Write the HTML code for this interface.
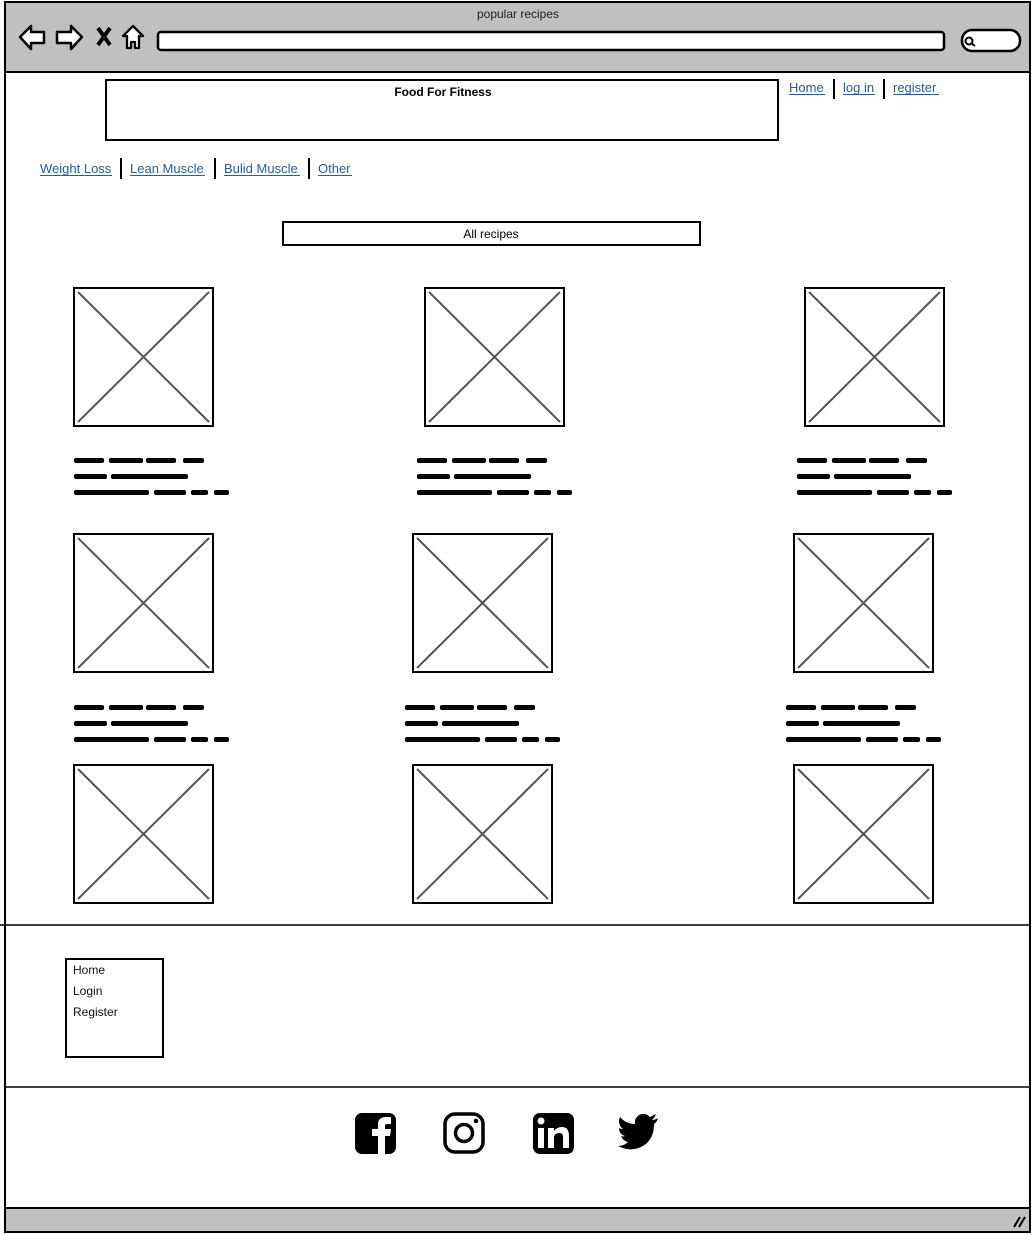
<!DOCTYPE html>
<html><head><meta charset="utf-8"><style>
html,body{margin:0;padding:0;background:#fff;width:1033px;height:1235px;overflow:hidden}
svg{display:block}
text{font-family:"Liberation Sans",sans-serif}
</style></head><body>
<svg width="1033" height="1235" viewBox="0 0 1033 1235" xmlns="http://www.w3.org/2000/svg">
<defs>
<g id="ph"><rect x="0" y="0" width="139" height="138" fill="#fff" stroke="#000" stroke-width="2"/><path d="M4 4L135 134M135 4L4 134" stroke="#555" stroke-width="2"/></g>
<g id="sq" fill="#000">
<rect x="0" y="-2" width="30" height="5" rx="2"/><rect x="35" y="-2" width="34" height="5" rx="2"/><rect x="72" y="-2" width="30" height="5" rx="2"/><rect x="109" y="-2" width="21" height="5" rx="2"/>
<rect x="0" y="14" width="33" height="5" rx="2"/><rect x="37" y="14" width="77" height="5" rx="2"/>
<rect x="0" y="30" width="75" height="5" rx="2"/><rect x="80" y="30" width="32" height="5" rx="2"/><rect x="117" y="30" width="17" height="5" rx="2"/><rect x="140" y="30" width="15" height="5" rx="2"/>
</g>
</defs>
<rect x="0" y="0" width="1033" height="1235" fill="#fff"/>
<rect x="5" y="2" width="1025" height="70" fill="#c0c0c0" stroke="#000" stroke-width="2"/>
<text x="518" y="18" font-size="12" text-anchor="middle" fill="#222">popular recipes</text>
<path d="M20 37L31 26V32H44V43H31V49Z" fill="#fff" stroke="#000" stroke-width="2.5" stroke-linejoin="round"/>
<path d="M82 37L71 26V32H57V43H71V49Z" fill="#fff" stroke="#000" stroke-width="2.5" stroke-linejoin="round"/>
<path d="M98 28L110 45M110 28L98 45" stroke="#000" stroke-width="4"/>
<path d="M133 26L143 36H139V48H135V42H131V48H127V36H123Z" fill="#fff" stroke="#000" stroke-width="2.3" stroke-linejoin="round"/>
<rect x="158" y="32" width="786" height="18" rx="3" fill="#fff" stroke="#000" stroke-width="2.5"/>
<rect x="962" y="30" width="58" height="21" rx="10" fill="#fff" stroke="#000" stroke-width="2.5"/>
<circle cx="969" cy="41" r="3.5" fill="none" stroke="#000" stroke-width="2"/><path d="M971 43L975 46" stroke="#000" stroke-width="2"/>
<path d="M5 72V1208M1030 72V1208" stroke="#000" stroke-width="2"/>
<rect x="106" y="80" width="672" height="60" fill="#fff" stroke="#000" stroke-width="2"/>
<text x="443" y="96" font-size="12" font-weight="bold" text-anchor="middle">Food For Fitness</text>
<g font-size="13" fill="#1f5fa6">
<text x="789" y="92">Home</text><text x="843" y="92">log in</text><text x="893" y="92">register</text>
<text x="40" y="173">Weight Loss</text><text x="130" y="173">Lean Muscle</text><text x="224" y="173">Bulid Muscle</text><text x="318" y="173">Other</text>
</g>
<g stroke="#1f5fa6" stroke-width="1"><path d="M789 94.5H825M843 94.5H875M893 94.5H939M40 175.5H112M130 175.5H205M224 175.5H300M318 175.5H352"/></g>
<path d="M834 79V99M884 79V99M121 158V179M215 158V179M309 158V179" stroke="#000" stroke-width="2"/>
<rect x="283" y="222" width="417" height="23" fill="#fff" stroke="#000" stroke-width="2"/>
<text x="491" y="238" font-size="12" text-anchor="middle">All recipes</text>
<use href="#ph" x="74" y="288"/><use href="#ph" x="425" y="288"/><use href="#ph" x="805" y="288"/>
<use href="#ph" x="74" y="534"/><use href="#ph" x="413" y="534"/><use href="#ph" x="794" y="534"/>
<use href="#ph" x="74" y="765"/><use href="#ph" x="413" y="765"/><use href="#ph" x="794" y="765"/>
<use href="#sq" x="74" y="460"/><use href="#sq" x="417" y="460"/><use href="#sq" x="797" y="460"/>
<use href="#sq" x="74" y="707"/><use href="#sq" x="405" y="707"/><use href="#sq" x="786" y="707"/>
<path d="M0 925H1030M5 1087H1030" stroke="#000" stroke-width="1.5"/>
<rect x="66" y="959" width="97" height="98" fill="#fff" stroke="#000" stroke-width="2"/>
<g font-size="12" fill="#111"><text x="73" y="974">Home</text><text x="73" y="995">Login</text><text x="73" y="1016">Register</text></g>
<rect x="355" y="1113" width="41" height="41" rx="7" fill="#000"/>
<path d="M378 1154V1136H372V1129H378V1124Q378 1117 386 1117H391V1124H387Q385 1124 385 1126V1129H391L390 1136H385V1154Z" fill="#fff"/>
<rect x="445" y="1114" width="38" height="38" rx="10" fill="none" stroke="#000" stroke-width="3.5"/>
<circle cx="464" cy="1133" r="8.5" fill="none" stroke="#000" stroke-width="3.5"/><circle cx="476" cy="1121" r="2.3" fill="#000"/>
<rect x="533" y="1113" width="41" height="41" rx="7" fill="#000"/>
<rect x="538" y="1128" width="6" height="20" fill="#fff"/><circle cx="541" cy="1121" r="3.5" fill="#fff"/>
<path d="M548 1128H554V1131Q557 1127 562 1127Q569 1127 569 1136V1148H563V1137Q563 1133 559.5 1133Q554 1133 554 1138V1148H548Z" fill="#fff"/>
<path d="M658 1118Q655 1120 652 1120Q655 1117 656 1114Q652 1116 650 1117Q645 1112 639 1115Q634 1119 635 1124Q626 1124 620 1117Q617 1124 623 1129Q620 1129 619 1128Q619 1134 625 1136Q623 1137 621 1136Q623 1141 628 1142Q624 1146 618 1146Q634 1154 647 1143Q654 1136 654 1124Q657 1122 658 1118Z" fill="#000"/>
<rect x="5" y="1208" width="1025" height="24" fill="#c0c0c0" stroke="#000" stroke-width="2"/>
<path d="M1014 1227L1020 1217M1019 1227L1025 1217" stroke="#000" stroke-width="2"/>
</svg>
</body></html>
